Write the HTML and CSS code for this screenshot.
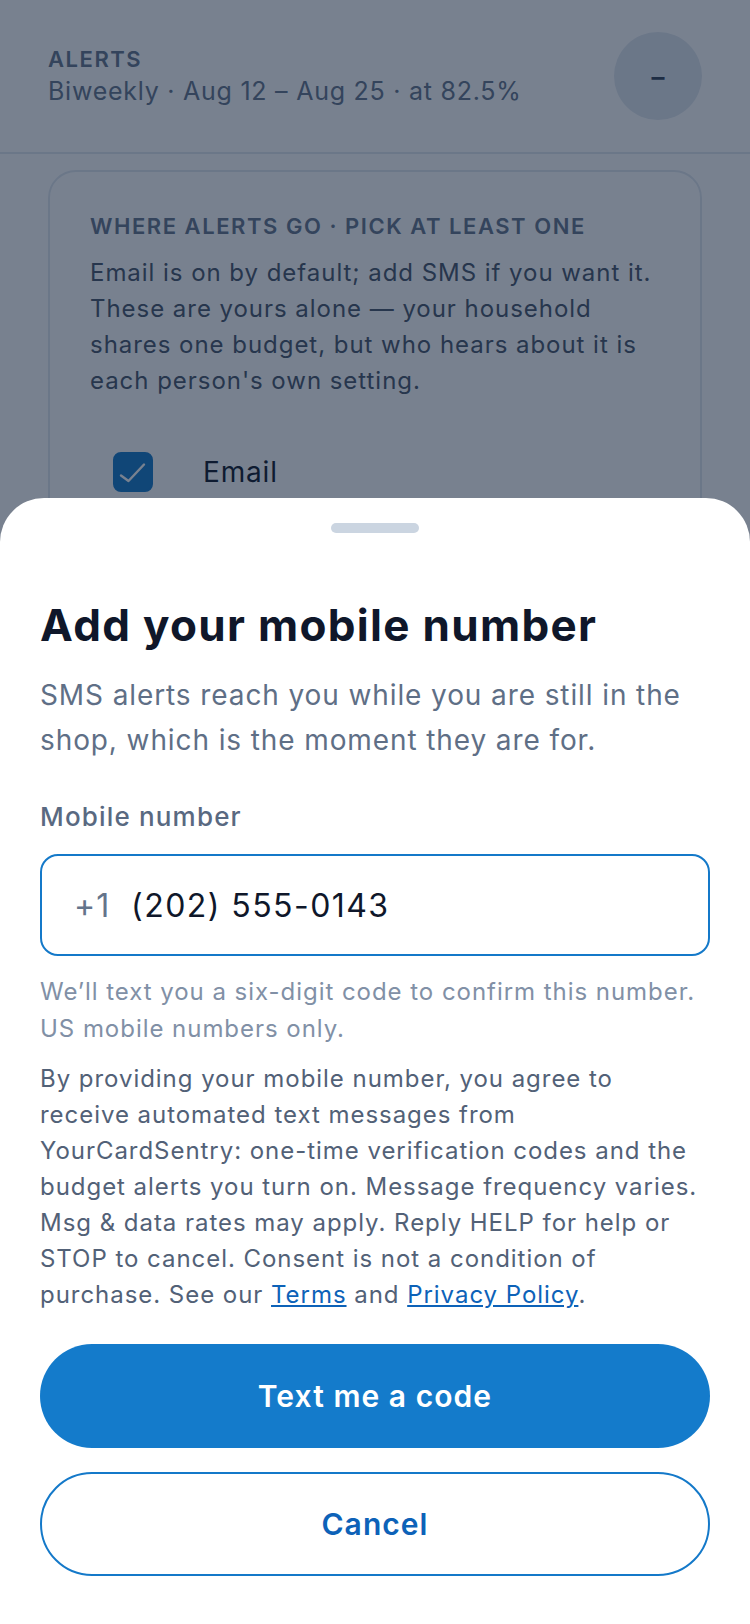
FILE: index.html
```html
<!DOCTYPE html>
<html lang="en">
<head>
    <meta charset="UTF-8">
    <meta name="viewport" content="width=device-width, initial-scale=1.0">
    <title>Add your mobile number</title>
    <link rel="stylesheet" href="styles.css">
</head>
<body>
    <div class="screen">
        <header class="alerts-head">
            <div class="head-text">
                <div class="eyebrow">Alerts</div>
                <div class="head-sub">Biweekly · Aug 12 – Aug 25 · at 82.5%</div>
            </div>
            <button class="collapse-btn" type="button" aria-label="Collapse">–</button>
        </header>

        <section class="channels-card">
            <div class="eyebrow">Where alerts go · Pick at least one</div>
            <p class="channels-note">Email is on by default; add SMS if you want it. These are yours alone — your household shares one budget, but who hears about it is each person's own setting.</p>
            <div class="channel-row">
                <span class="checkbox checked">
                    <svg viewBox="0 0 40 40" width="40" height="40"><polyline points="8,23.5 15.5,29 31,12.5" fill="none" stroke="#fff" stroke-width="2.4" stroke-linecap="round" stroke-linejoin="round"/></svg>
                </span>
                <span class="channel-name">Email</span>
            </div>
            <div class="channel-row">
                <span class="checkbox"></span>
                <span class="channel-name">SMS</span>
            </div>
        </section>
    </div>

    <div class="scrim"></div>

    <div class="sheet" role="dialog" aria-labelledby="sheetTitle">
        <div class="sheet-handle"></div>
        <h1 id="sheetTitle">Add your mobile number</h1>
        <p class="sheet-lead">SMS alerts reach you while you are still in the shop, which is the moment they are for.</p>

        <label class="field-label" for="mobile">Mobile number</label>
        <div class="phone-field">
            <span class="country-code">+1</span>
            <input type="tel" id="mobile" name="mobile" value="(202) 555-0143">
        </div>
        <p class="field-hint">We’ll text you a six-digit code to confirm this number. US mobile numbers only.</p>

        <p class="consent">By providing your mobile number, you agree to receive automated text messages from YourCardSentry: one-time verification codes and the budget alerts you turn on. Message frequency varies. Msg &amp; data rates may apply. Reply HELP for help or STOP to cancel. Consent is not a condition of purchase. See our <a href="#">Terms</a> and <a href="#">Privacy Policy</a>.</p>

        <button class="btn btn-primary" type="button">Text me a code</button>
        <button class="btn btn-outline" type="button">Cancel</button>
    </div>
</body>
</html>
```

FILE: styles.css
```css
body {
    margin: 0;
    background-color: #fff;
    font-family: Inter, "Noto Sans", sans-serif;
    color: #0f172a;
}

/* page behind the sheet */
.screen {
    min-height: 1624px;
}
.alerts-head {
    display: flex;
    align-items: center;
    justify-content: space-between;
    padding: 32px 48px;
    border-bottom: 2px solid #e2e8f0;
}
.eyebrow {
    font-size: 22px;
    line-height: 28px;
    font-weight: 600;
    letter-spacing: 0.07em;
    text-transform: uppercase;
    color: #64748b;
}
.head-sub {
    font-size: 25px;
    line-height: 34px;
    letter-spacing: 0.03em;
    color: #64748b;
    margin-top: 1px;
}
.collapse-btn {
    width: 88px;
    height: 88px;
    border: none;
    border-radius: 50%;
    background-color: #e2e8f0;
    color: #334155;
    font-family: inherit;
    font-size: 26px;
    font-weight: 600;
    padding: 0;
}
.channels-card {
    margin: 16px 48px 0;
    padding: 40px;
    border: 2px solid #e2e8f0;
    border-radius: 28px;
}
.channels-note {
    margin: 15px 0 0;
    font-size: 24px;
    line-height: 36px;
    letter-spacing: 0.04em;
    color: #475569;
}
.channel-row {
    display: flex;
    align-items: center;
    gap: 50px;
    padding-left: 23px;
    margin-top: 53px;
}
.channel-name {
    font-size: 28px;
    letter-spacing: 0.03em;
    color: #0f172a;
}
.checkbox {
    width: 40px;
    height: 40px;
    border-radius: 8px;
    border: 2px solid #94a3b8;
    box-sizing: border-box;
}
.checkbox.checked {
    background-color: #1479c9;
    border-color: #1479c9;
}
.checkbox svg {
    display: block;
    margin: -2px;
}

/* dimmed backdrop */
.scrim {
    position: fixed;
    inset: 0;
    background-color: rgba(15, 30, 55, 0.56);
}

/* bottom sheet */
.sheet {
    position: fixed;
    left: 0;
    right: 0;
    bottom: 0;
    display: flex;
    flex-direction: column;
    padding: 25px 40px 48px;
    background-color: #fff;
    border-radius: 44px 44px 0 0;
}
.sheet-handle {
    align-self: center;
    width: 88px;
    height: 10px;
    border-radius: 5px;
    background-color: #cbd5e1;
}
.sheet h1 {
    margin: 65px 0 0;
    font-size: 44px;
    line-height: 54px;
    font-weight: 700;
    letter-spacing: 0.03em;
    color: #0f172a;
}
.sheet-lead {
    margin: 21px 0 0;
    font-size: 28px;
    line-height: 45px;
    letter-spacing: 0.032em;
    color: #5f6f86;
}
.field-label {
    margin-top: 37px;
    font-size: 26px;
    line-height: 34px;
    font-weight: 500;
    letter-spacing: 0.045em;
    color: #596981;
}
.phone-field {
    display: flex;
    align-items: center;
    gap: 21px;
    height: 102px;
    margin-top: 20px;
    padding: 0 34px 0 32px;
    border: 2px solid #1479c9;
    border-radius: 18px;
    box-sizing: border-box;
}
.country-code {
    font-size: 32px;
    letter-spacing: 0.03em;
    color: #64748b;
}
.phone-field input {
    flex: 1;
    border: none;
    outline: none;
    padding: 0;
    background: transparent;
    font-family: inherit;
    font-size: 32px;
    letter-spacing: 0.045em;
    color: #0f172a;
}
.field-hint {
    margin: 17px 0 0;
    font-size: 24px;
    line-height: 37px;
    letter-spacing: 0.04em;
    color: #8190a6;
}
.consent {
    margin: 14px 0 0;
    font-size: 24px;
    line-height: 36px;
    letter-spacing: 0.04em;
    color: #526177;
}
.consent a {
    color: #0d62b8;
}
.btn {
    display: block;
    width: 100%;
    height: 104px;
    border-radius: 52px;
    font-family: inherit;
    font-size: 30px;
    font-weight: 600;
    letter-spacing: 0.035em;
    cursor: pointer;
}
.btn-primary {
    margin-top: 31px;
    border: none;
    background-color: #147bcb;
    color: #fff;
}
.btn-outline {
    margin-top: 24px;
    border: 2px solid #1479c9;
    background-color: #fff;
    color: #0d62b8;
}
```
